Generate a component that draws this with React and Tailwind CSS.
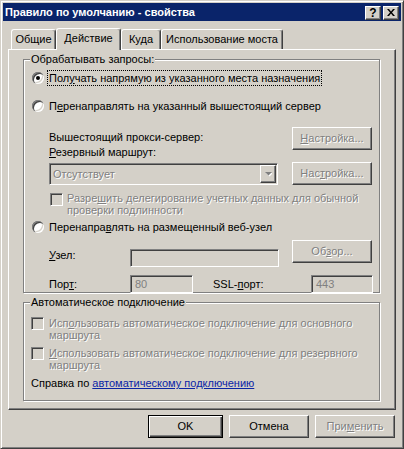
import React from 'react'

// classic win2k bevels
const raised = 'border border-t-white border-l-white border-r-[#404040] border-b-[#404040] shadow-[inset_-1px_-1px_0_#808080]'
const sunken = 'border border-t-[#808080] border-l-[#808080] border-r-white border-b-white shadow-[inset_1px_1px_0_#404040,inset_-1px_-1px_0_#d4d0c8]'
const etched = 'border border-[#808080] shadow-[inset_1px_1px_0_#fff,1px_1px_0_#fff]'
const grayed = 'text-[#808080] [text-shadow:1px_1px_0_#fff]'

const U = ({ children }) => <span className="underline underline-offset-[1px]">{children}</span>

const Radio = ({ checked }) => (
  <div className="relative w-[12px] h-[12px] shrink-0 rounded-full bg-white shadow-[inset_1px_1px_0_#808080,inset_2px_2px_0_#404040,inset_-1px_-1px_0_#fff,inset_-2px_-2px_0_#d4d0c8]">
    {checked && <div className="absolute left-[4px] top-[4px] w-[4px] h-[4px] rounded-full bg-black" />}
  </div>
)

const Check = () => <div className={`w-[13px] h-[13px] shrink-0 bg-[#d4d0c8] ${sunken}`} />

const Btn = ({ children, disabled, className = '' }) => (
  <div className={`w-[80px] h-[23px] flex items-center justify-center bg-[#d4d0c8] ${raised} ${disabled ? grayed : 'text-black'} ${className}`}>
    {children}
  </div>
)

const Field = ({ children, className = '' }) => (
  <div className={`h-[18px] bg-[#d4d0c8] ${sunken} flex items-center pl-[4px] text-[#808080] ${className}`}>
    {children}
  </div>
)

const Group = ({ title, className = '', children }) => (
  <div className={`relative ml-[14px] w-[357px] ${etched} ${className}`}>
    <div className="absolute -top-[7px] left-[6px] px-[1px] bg-[#d4d0c8] leading-[13px]">{title}</div>
    {children}
  </div>
)

const Tab = ({ children, active, w }) => (
  <div
    className={`${w} flex items-center justify-center bg-[#d4d0c8] rounded-t-[3px] border-t border-l border-r border-t-white border-l-white border-r-[#404040] shadow-[inset_-1px_0_0_#808080] ${
      active ? 'relative z-10 h-[22px] -mb-px pb-[2px]' : 'h-[20px]'
    }`}
  >
    {children}
  </div>
)

export default function App() {
  return (
    <div className="w-[404px] h-[449px] bg-[#d4d0c8] p-[2px] border border-t-[#d4d0c8] border-l-[#d4d0c8] border-r-[#404040] border-b-[#404040] shadow-[inset_1px_1px_0_#fff,inset_-1px_-1px_0_#808080] font-['Liberation_Sans',Arial,sans-serif] text-[11px] text-black leading-[13px] select-none">
      {/* title bar */}
      <div className="h-[18px] bg-[#0a246a] flex items-center justify-between pl-[2px] pr-[2px]">
        <span className="text-white font-bold text-[11px]">Правило по умолчанию - свойства</span>
        <div className="flex gap-[2px] mt-[1px]">
          <div className={`w-[16px] h-[14px] flex items-center justify-center bg-[#d4d0c8] ${raised} font-bold text-[12px] leading-none`}>?</div>
          <div className={`w-[16px] h-[14px] flex items-center justify-center bg-[#d4d0c8] ${raised}`}>
            <svg width="8" height="7" viewBox="0 0 8 7">
              <path d="M0 0h2l2 2.5L6 0h2L5 3.5 8 7H6L4 4.5 2 7H0l3-3.5z" fill="#000" />
            </svg>
          </div>
        </div>
      </div>

      <div className="px-[5px]">
        {/* tabs */}
        <div className="mt-[7px] h-[21px] flex items-end pl-[3px]">
          <Tab w="w-[45px]">Общие</Tab>
          <Tab w="w-[65px]" active>Действие</Tab>
          <Tab w="w-[40px]">Куда</Tab>
          <Tab w="w-[122px]">Использование моста</Tab>
        </div>

        {/* panel */}
        <div className="h-[361px] border border-t-white border-l-white border-r-[#404040] border-b-[#404040] shadow-[inset_-1px_-1px_0_#808080] pt-[9px]">
          <Group title="Обрабатывать запросы:" className="h-[234px]">
            <div className="pt-[10px] h-[26px] flex items-center pl-[8px]">
              <Radio checked />
              <span className="ml-[3px] px-[1px] h-[16px] leading-[14px] border border-dotted border-black">
                Пол<U>у</U>чать напрямую из указанного места назначения
              </span>
            </div>
            <div className="mt-[12px] h-[16px] flex items-center pl-[8px]">
              <Radio />
              <span className="ml-[5px]">П<U>е</U>ренаправлять на указанный вышестоящий сервер</span>
            </div>

            <div className="mt-[13px] flex">
              <div className="ml-[25px] flex-1 flex flex-col">
                <div className="mt-[4px]">Вышестоящий прокси-сервер:</div>
                <div className="mt-[2px]"><U>Р</U>езервный маршрут:</div>
                <div className={`mt-[4px] w-[229px] h-[22px] bg-[#d4d0c8] ${sunken} flex items-center`}>
                  <span className={`flex-1 pl-[3px] ${grayed}`}>Отсутствует</span>
                  <div className={`w-[16px] h-[18px] mr-px bg-[#d4d0c8] ${raised} flex items-center justify-center`}>
                    <svg width="7" height="5" viewBox="0 0 7 5">
                      <path d="M1 1h7L4.5 4.5z" fill="#fff" />
                      <path d="M0 0h7L3.5 3.5z" fill="#808080" />
                    </svg>
                  </div>
                </div>
              </div>
              <div className="mr-[7px] flex flex-col">
                <Btn disabled><U>Н</U>астройка...</Btn>
                <Btn disabled className="mt-[12px]">Нас<U>т</U>ройка...</Btn>
              </div>
            </div>

            <div className={`mt-[7px] flex items-start pl-[26px] ${grayed}`}>
              <div className="mt-px [text-shadow:none]"><Check /></div>
              <div className="ml-[4px] leading-[12px]">
                Разре<U>ш</U>ить делегирование учетных данных для обычной
                <br />
                проверки подлинности
              </div>
            </div>

            <div className="mt-[3px] h-[16px] flex items-center pl-[8px]">
              <Radio />
              <span className="ml-[5px]">Перенапра<U>в</U>лять на размещенный веб-узел</span>
            </div>

            <div className="flex items-start">
              <div className="ml-[25px] w-[81px] mt-[14px]"><U>У</U>зел:</div>
              <Field className="mt-[14px] w-[149px]" />
              <Btn disabled className="ml-auto mr-[7px] mt-[5px]">Об<U>з</U>ор...</Btn>
            </div>

            <div className="mt-[8px] flex items-center">
              <div className="ml-[25px] w-[81px]">Пор<U>т</U>:</div>
              <Field className="w-[63px]">80</Field>
              <div className="ml-[20px] w-[98px]">SSL-<U>п</U>орт:</div>
              <Field className="w-[62px]">443</Field>
            </div>
          </Group>

          <Group title="Автоматическое подключение" className="mt-[9px] h-[99px]">
            <div className={`pt-[14px] flex items-start pl-[7px] ${grayed}`}>
              <div className="[text-shadow:none]"><Check /></div>
              <div className="ml-[5px] leading-[12px]">
                Исп<U>о</U>льзовать автоматическое подключение для основного
                <br />
                маршрута
              </div>
            </div>
            <div className={`mt-[6px] flex items-start pl-[7px] ${grayed}`}>
              <div className="[text-shadow:none]"><Check /></div>
              <div className="ml-[5px] leading-[12px]">
                <U>И</U>спользовать автоматическое подключение для резервного
                <br />
                маршрута
              </div>
            </div>
            <div className="mt-[6px] pl-[7px]">
              Справка по <span className="text-[#0b24a6] underline underline-offset-[1px]">автоматическому подключению</span>
            </div>
          </Group>
        </div>

        {/* dialog buttons */}
        <div className="mt-[5px] flex justify-end gap-[6px] pr-px">
          <div className="w-[75px] h-[23px] flex items-center justify-center bg-[#d4d0c8] border border-black shadow-[inset_1px_1px_0_#fff,inset_-1px_-1px_0_#404040,inset_-2px_-2px_0_#808080]">
            OK
          </div>
          <Btn className="w-[75px]">Отмена</Btn>
          <Btn disabled className="w-[75px]">При<U>м</U>енить</Btn>
        </div>
      </div>
    </div>
  )
}
